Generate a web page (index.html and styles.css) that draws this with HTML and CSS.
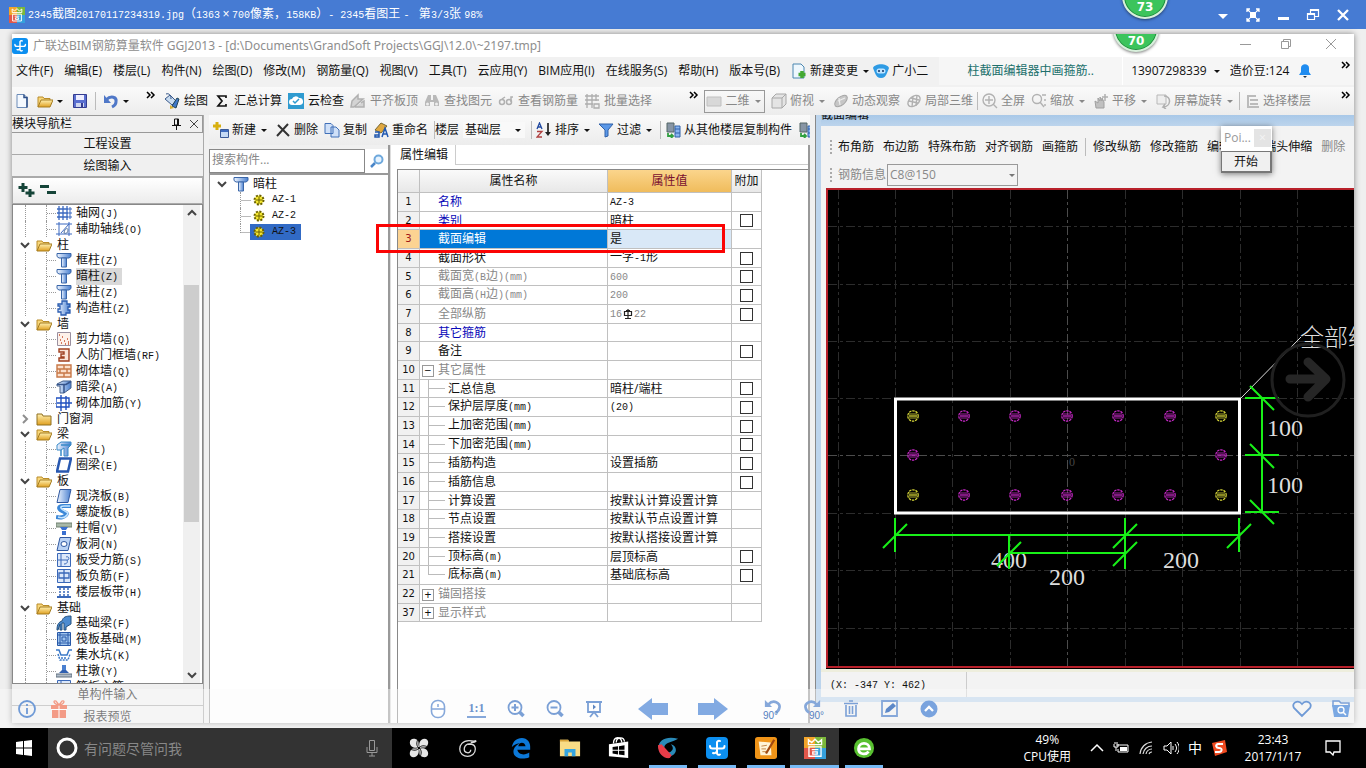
FILE: index.html
```html
<!DOCTYPE html>
<html lang="zh-CN">
<head>
<meta charset="utf-8">
<title>2345看图王</title>
<link rel="stylesheet" href="styles.css">
</head>
<body>
<svg class="defs" aria-hidden="true">
  <linearGradient id="gold" x1="0" y1="0" x2="0" y2="1"><stop offset="0" stop-color="#fff0b0"/><stop offset="1" stop-color="#e0a020"/></linearGradient>
  <linearGradient id="steel" x1="0" y1="0" x2="1" y2="0"><stop offset="0" stop-color="#eef5ff"/><stop offset="1" stop-color="#4a80d0"/></linearGradient>
  <symbol id="glodon" viewBox="0 0 22 22"><rect width="22" height="22" rx="4" fill="#0c8ff0"/><path d="M11 5v11.500a2 2 0 0 0 3 1M11 6a2 2 0 0 1 3-2M4 9a2.500 2.500 0 0 0 2.500 2.500H16a2.500 2.500 0 0 0 2.500-2.500M7 16a3 3 0 0 0 4-2" fill="none" stroke="#fff" stroke-width="2" stroke-linecap="round"/></symbol>
  <symbol id="king" viewBox="0 0 20 20"><path d="M0 0h10v10H0z" fill="#f3a52a"/><path d="M10 0h10v10H10z" fill="#7cb83a"/><path d="M0 10h10v10H0z" fill="#e2574a"/><path d="M10 10h10v10H10z" fill="#35a0dc"/><path d="M4 7V2.500l3 2.500 3-3 3 3 3-2.500V7zM4.500 9h11v8.500h-11zM7 11.500h6M8 13.500h4v2H8z" fill="none" stroke="#fff" stroke-width="1.200"/></symbol>
  <symbol id="arrow" viewBox="0 0 10 16"><path d="M2 7h6L5 10z" fill="currentColor"/></symbol>
  <symbol id="more" viewBox="0 0 10 8"><path d="M1 1l3 3-3 3M5 1l3 3-3 3" fill="none" stroke="#000" stroke-width="1.500"/></symbol>
  <symbol id="new" viewBox="0 0 16 16"><path d="M3 1.500h7l3 3v10H3z" fill="#f4f9ff" stroke="#6c8cb8"/><path d="M10 1.500v3h3v10" fill="none" stroke="#2d4f88" stroke-width="1.500"/></symbol>
  <symbol id="open" viewBox="0 0 16 16"><path d="M1 14V4h5l1 1.500h6V8" fill="#f8d77a" stroke="#b98c2a"/><path d="M1 14l3-7h12l-3 7z" fill="url(#gold)" stroke="#a57c20"/></symbol>
  <symbol id="closedf" viewBox="0 0 16 16"><path d="M1 14V3h5l1 2h8v9z" fill="url(#gold)" stroke="#907020"/></symbol>
  <symbol id="save" viewBox="0 0 16 16"><path d="M1.500 1.500h13v13h-13z" fill="#5a6fd0" stroke="#343c90"/><path d="M4 2h8v5H4z" fill="#eef"/><path d="M4 10h8v4H4z" fill="#cfd6f0"/><path d="M9 10h2v4H9z" fill="#343c90"/></symbol>
  <symbol id="undo" viewBox="0 0 16 16"><path d="M3 7c5-5 11-3 10 2 0 2-2 4-4 5" fill="none" stroke="#5078c8" stroke-width="3"/><path d="M1 2v8h7z" fill="#5078c8"/></symbol>
  <symbol id="paint" viewBox="0 0 16 16"><path d="M1 6l5-4 6 6-4 4z" fill="#c9dcf0" stroke="#39588a"/><path d="M2 1c3-1 5 1 5 5" fill="none" stroke="#39588a"/><path d="M8 13l5-8 2 1-3 9z" fill="#3f78c8" stroke="#245"/><path d="M6 12l4 3-4 1z" fill="#d9b030"/></symbol>
  <symbol id="sum" viewBox="0 0 16 16"><path d="M12 5V3H4l4 5-4 5h8v-2" fill="none" stroke="#111" stroke-width="1.700"/></symbol>
  <symbol id="check" viewBox="0 0 16 16"><path d="M0 0h16v16H0z" fill="#2f9bd0"/><path d="M4 12a3 3 0 0 1 0-6 4 4 0 0 1 7-1 3.500 3.500 0 0 1 1 7z" fill="#fff"/><path d="M5 8l2 2 4-4" fill="none" stroke="#2f9bd0" stroke-width="1.500"/></symbol>
  <symbol id="slab" viewBox="0 0 16 16"><path d="M2 8l6-6v4h5L4 14H1zM5 14h9V8l-3 2" fill="#d4d4d4" stroke="#b0b0b0" stroke-width="1.500"/></symbol>
  <symbol id="find" viewBox="0 0 16 16"><path d="M4 2h3v5H9V2h3l3 7v4h-5V9H6v4H1V9z" fill="#b9b9b9"/><circle cx="3.500" cy="11" r="1.500" fill="#eee"/><circle cx="12.500" cy="11" r="1.500" fill="#eee"/></symbol>
  <symbol id="glass" viewBox="0 0 16 16"><g fill="none" stroke="#b0b0b0" stroke-width="1.500"><circle cx="4" cy="9" r="2.500"/><circle cx="11" cy="9" r="2.500"/><path d="M4 6l3-2M13 9V4h2"/></g></symbol>
  <symbol id="gridg" viewBox="0 0 16 16"><path d="M1 3h14M1 7h14M1 11h8M3 1v14M8 1v14M12 1v7M10 11h5v4h-5z" fill="none" stroke="#adadad" stroke-width="1.300"/></symbol>
  <symbol id="flat" viewBox="0 0 16 16"><path d="M1 4h14v9H1z" fill="#d8d8d8" stroke="#c0c0c0"/></symbol>
  <symbol id="cube" viewBox="0 0 16 16"><path d="M1 5l4-4h10v10l-4 4H1zM1 5h10v10M11 5l4-4" fill="#e4e4e4" stroke="#a8a8a8"/></symbol>
  <symbol id="orbit" viewBox="0 0 16 16"><ellipse cx="8" cy="8" rx="7.500" ry="4" transform="rotate(-40 8 8)" fill="#c6c6c6" stroke="#a6a6a6"/><path d="M5 8l7-3M7 12l-1-7" stroke="#eee" stroke-width="1.200"/></symbol>
  <symbol id="local3" viewBox="0 0 16 16"><g fill="none" stroke="#b0b0b0" stroke-width="1.400"><ellipse cx="8" cy="8" rx="7" ry="4.500" transform="rotate(-40 8 8)"/><path d="M3 8l9 2M5 5l8 2M7 3l-1 11M11 2l-1 11"/></g></symbol>
  <symbol id="full" viewBox="0 0 16 16"><g fill="none" stroke="#b2b2b2" stroke-width="1.400"><circle cx="7" cy="7" r="6"/><path d="M7 3v8M3 7h8M11 11l4 4"/></g></symbol>
  <symbol id="zoomg" viewBox="0 0 16 16"><g fill="none" stroke="#b2b2b2" stroke-width="1.400"><circle cx="6" cy="6" r="4.500"/><path d="M9 9l4 5M11 2h4M13 7h2M13 12h2"/></g></symbol>
  <symbol id="pan" viewBox="0 0 16 16"><path d="M3 15l-1-7 3 2V5l2 3V4l2 4V5l2 4v6z" fill="#c0c0c0" stroke="#a0a0a0"/><path d="M12 1v7M9 4h6" stroke="#b0b0b0" stroke-width="1.500"/></symbol>
  <symbol id="rot" viewBox="0 0 16 16"><path d="M2 2h9v9H2z" fill="#eee" stroke="#b8b8b8"/><path d="M9 3c8 0 7 11-1 11l2-3M8 14l3 2" fill="none" stroke="#b0b0b0" stroke-width="1.500"/></symbol>
  <symbol id="floors" viewBox="0 0 16 16"><path d="M3 3h9M6 7h8M6 11h8M3 14h12M4 3v11" fill="none" stroke="#bbb" stroke-width="2"/></symbol>
  <symbol id="change" viewBox="0 0 16 16"><path d="M2 1h8l3 3v11H2z" fill="#eef7fd" stroke="#4a86b0"/><path d="M11 8v7M7.500 11.500h7" stroke="#43a832" stroke-width="3.500"/></symbol>
  <symbol id="robot" viewBox="0 0 16 16"><path d="M0 5c2-5 14-5 16 0l-2 5c-1 3-3 5-6 5s-5-2-6-5z" fill="#2e9be4"/><rect x="3.500" y="5.500" width="9" height="5" rx="2.500" fill="#bfe4ff"/><path d="M5 8h2M9 8h2" stroke="#136" stroke-width="1.500"/></symbol>
  <symbol id="bell" viewBox="0 0 16 16"><path d="M2 12l2-3V5c0-5 8-5 8 0v4l2 3z" fill="#1f8cf0"/><path d="M6 13h4l-2 2z" fill="#234"/></symbol>
  <symbol id="create" viewBox="0 0 16 16"><path d="M4 0v8M0 4h8" stroke="#d8b010" stroke-width="3"/><path d="M7.500 7.500h8v8h-8z" fill="#c5daf5" stroke="#3a5a98"/><path d="M8 8h7v2H8z" fill="#3f6cc0"/></symbol>
  <symbol id="cross" viewBox="0 0 16 16"><path d="M3 3l11 11M13 2L2 14" stroke="#333" stroke-width="2"/></symbol>
  <symbol id="copy" viewBox="0 0 16 16"><path d="M1 1.500h6l2 2v8H1zM7 5h5l3 3v7H7z" fill="#cfe0f8" stroke="#4170b8"/></symbol>
  <symbol id="rename" viewBox="0 0 16 16"><path d="M2 8L8 1l6 3-6 7z" fill="#e0a840" stroke="#7a6830"/><path d="M2 10h4v5H2v-2h4M9 15l3-9 3 9M10 12h4" fill="none" stroke="#2058b0" stroke-width="1.500"/></symbol>
  <symbol id="sort" viewBox="0 0 16 16"><path d="M1 7l2.500-6L6 7M2 5h3" fill="none" stroke="#2048a0" stroke-width="1.300"/><path d="M1 9.500h5L1 15h5" fill="none" stroke="#b04040" stroke-width="1.300"/><path d="M12 1v11" stroke="#222" stroke-width="1.700"/><path d="M9 10h6l-3 4z" fill="#222"/></symbol>
  <symbol id="funnel" viewBox="0 0 16 16"><path d="M1 2h14l-5 6v6l-3 1V8z" fill="#5b98e8" stroke="#3060a8"/></symbol>
  <symbol id="fromfl" viewBox="0 0 16 16"><path d="M2 1h7v9H2z" fill="#8795a5" stroke="#566"/><path d="M10 4h5v11h-5zM10 7h5M10 11h5" fill="#88b5f0" stroke="#3060a8"/><path d="M3 11v3h4M6 12l2 2-2 2" fill="none" stroke="#30a040" stroke-width="1.800"/></symbol>
  <symbol id="search" viewBox="0 0 16 16"><circle cx="9.500" cy="6.500" r="4" fill="#e6f3ff" stroke="#6ea8dc" stroke-width="2"/><path d="M6 10l-4 4" stroke="#4a86c8" stroke-width="2.500"/></symbol>
  <symbol id="col" viewBox="0 0 16 16"><path d="M1 1.500h14v3l-2 1.500H3L1 4.500z" fill="url(#steel)" stroke="#3a66a8"/><path d="M5.500 6h5v9h-5z" fill="url(#steel)" stroke="#3a66a8"/></symbol>
  <symbol id="gear" viewBox="0 0 12 12"><circle cx="6" cy="6" r="4.500" fill="#f5e830" stroke="#6a6000" stroke-width="2" stroke-dasharray="2 1.500"/><path d="M6 2.500v7M2.500 6h7" stroke="#6a6000"/></symbol>
  <symbol id="axis" viewBox="0 0 16 16"><path d="M1 4h11M1 8h11M1 12h11M3 1v14M7 1v14M11 1v14" stroke="#3a68c0" stroke-width="1.300"/><path d="M13 3h2v2h-2zM13 7h2v2h-2zM13 11h2v2h-2z" fill="#fff" stroke="#3a68c0"/></symbol>
  <symbol id="axis2" viewBox="0 0 16 16"><path d="M3 1v14M13 1v14M0 3h16M0 13h16M5 12l8-9" stroke="#3a68c0" fill="none"/><path d="M8 12c0-4 4-6 4-3s-2 4-4 3z" fill="none" stroke="#5a78a0"/></symbol>
  <symbol id="gz" viewBox="0 0 16 16"><path d="M6 1h5v3h3v3h-2v3h2v3h-4v2H5v-3H2V9h2V6H2V4h4z" fill="url(#steel)" stroke="#2a5cb0" stroke-width="1.300"/></symbol>
  <symbol id="wall" viewBox="0 0 16 16"><path d="M1.500 1.500h13v13h-13z" fill="#fdf1ea" stroke="#9a90a0"/><path d="M3 4h1M6 6h1M4 9h1M8 10h1M11 8h1M5 12h1M9 13h1M12 11h1M12 13h1" stroke="#c85030" stroke-width="1.500"/></symbol>
  <symbol id="rf" viewBox="0 0 16 16"><path d="M3 2h10v12H3v-3h5v-1H5V7h3V5H3z" fill="#fbe5d8" stroke="#a04020" stroke-width="1.400"/></symbol>
  <symbol id="brick" viewBox="0 0 16 16"><path d="M1 2h14v12H1zM1 6h14M1 10h14M8 2v4M4 6v4M11 6v4M8 10v4" fill="#fbe0cc" stroke="#c87848" stroke-width="1.400"/></symbol>
  <symbol id="hbeam" viewBox="0 0 16 16"><path d="M1 5l6-3h8v7l-7 5H4V7H1z" fill="url(#steel)" stroke="#44608c"/><path d="M1 5.500h9l5-3M8 6v8" fill="none" stroke="#36548c" stroke-width="1.500"/></symbol>
  <symbol id="rein" viewBox="0 0 16 16"><path d="M0 3h13v9H0zM5 0v16M10 1v14M1 8h15" fill="none" stroke="#2050c0" stroke-width="1.400"/></symbol>
  <symbol id="beam" viewBox="0 0 16 16"><path d="M1 4l4-3h10v3l-3 3v8H8V7L5 9H1z" fill="url(#steel)" stroke="#3a8ac8"/><path d="M5 15V9M5 4h10" fill="none" stroke="#3a8ac8" stroke-width="1.500"/></symbol>
  <symbol id="ring" viewBox="0 0 16 16"><path d="M4 1.500h11L12 14.500H1z" fill="#fff" stroke="#2858b0" stroke-width="2.500"/></symbol>
  <symbol id="plate" viewBox="0 0 16 16"><path d="M4 1.500h11L12 14.500H1z" fill="url(#steel)" stroke="#3058a0"/></symbol>
  <symbol id="spiral" viewBox="0 0 16 16"><path d="M15 2H7C2 2 2 5 6 7s6 2 4 4-6 3-10 2" fill="none" stroke="#3c88d8" stroke-width="4"/><path d="M14 2H8C4 2 4 4 7 6s6 2 4 5-6 3-9 2" fill="none" stroke="#c5e5ff" stroke-width="1.500"/></symbol>
  <symbol id="cap" viewBox="0 0 16 16"><path d="M0 3h16v4H0z" fill="#a8b8a8" stroke="#708070"/><path d="M4 7h8l-2 3H6zM6 11h4v4H6z" fill="#3a70d0"/></symbol>
  <symbol id="hole" viewBox="0 0 16 16"><path d="M4 1.500h11L12 14.500H1z" fill="#b9d2f5" stroke="#3058a0"/><ellipse cx="8" cy="8" rx="3" ry="2.500" fill="#fff" stroke="#3058a0"/></symbol>
  <symbol id="lbar" viewBox="0 0 16 16"><path d="M1.500 1.500h13v13h-13z" fill="#dce8fa" stroke="#3a68b8"/><path d="M5 1v13M2 8h10c2-2 0-4-2-3M8 12c3 0 4-2 3-4" fill="none" stroke="#3a68b8"/></symbol>
  <symbol id="fbar" viewBox="0 0 16 16"><path d="M1.500 1.500h13v13h-13z" fill="#dce8fa" stroke="#3a68b8"/><path d="M8 1v14M3 5h10v5H3z" fill="none" stroke="#3a68b8" stroke-width="1.300"/></symbol>
  <symbol id="strip" viewBox="0 0 16 16"><path d="M1 3h14M1 13h14" stroke="#3a68b8" stroke-width="2"/><path d="M4 4v9M8 4v9M12 4v9" stroke="#3a68b8" stroke-width="1.500" stroke-dasharray="2 1"/></symbol>
  <symbol id="fbeam" viewBox="0 0 16 16"><path d="M1 15c0-6 2-8 5-9 1-4 4-5 9-5v8l-5 3v3H8V8H6v7H4V9l-2 6z" fill="#4c8bd0" stroke="#24507c"/></symbol>
  <symbol id="raft" viewBox="0 0 16 16"><path d="M1.500 1.500h13v13h-13z" fill="#9ec4ee" stroke="#2858a8"/><path d="M4 1v14M12 1v14M1 4h14M1 12h14M6 6h4v4H6z" fill="none" stroke="#2858a8"/></symbol>
  <symbol id="pit" viewBox="0 0 16 16"><path d="M0 3h3l2 5h6l2-5h3" fill="none" stroke="#3a78c8" stroke-width="1.500"/><path d="M2 7l2 6h8l2-6M5 11h6" fill="none" stroke="#3a78c8" stroke-width="1.500" stroke-dasharray="2 1"/></symbol>
  <symbol id="pier" viewBox="0 0 16 16"><path d="M6 2h4v5H6z" fill="#4a80d0"/><path d="M3 10l3-3h4l3 3z" fill="#3060b0"/><path d="M0 11h16v3H0z" fill="#b0bcc8" stroke="#607080"/></symbol>
  <symbol id="chev" viewBox="0 0 14 16"><path d="M3 6l4 4 4-4" fill="none" stroke="#444" stroke-width="2"/></symbol>
  <symbol id="bar" viewBox="-6 -6 12 12"><circle r="5.200" fill="none" stroke="currentColor" stroke-width="1.200" stroke-dasharray="2.500 .8"/><path d="M-3-3v6M3-3v6M-1-3v6M1-3v6M-4 0h8" fill="none" stroke="currentColor" stroke-width=".8"/></symbol>
</svg>

<header class="viewer-bar">
  <svg class="viewer-logo"><use href="#king"/></svg>
  <h1><span class="m">2345</span>截图<span class="m">20170117234319.jpg</span>（<span class="m">1363</span><span class="wide">×</span><span class="m">700</span>像素，<span class="m">158KB</span>）<span class="m">- 2345</span>看图王 <span class="m">- </span> 第<span class="m">3/3</span>张 <span class="m">98%</span></h1>
  <div class="ball ball-top">73</div>
  <div class="win-buttons">
    <button aria-label="菜单"><svg viewBox="0 0 14 14"><path d="M2 6h10l-5 5z" fill="#fff"/></svg></button>
    <button aria-label="全屏"><svg viewBox="0 0 14 14"><path d="M4 4h6v6H4z" fill="#fff"/><path d="M1 4V1h3M10 1h3v3M13 10v3h-3M4 13H1v-3M1 1l3 3M13 1l-3 3M13 13l-3-3M1 13l3-3" fill="none" stroke="#fff" stroke-width="1.300"/></svg></button>
    <button aria-label="最小化"><svg viewBox="0 0 14 14"><path d="M2 9h11v3H2z" fill="#fff"/></svg></button>
    <button aria-label="还原"><svg viewBox="0 0 14 14"><path d="M4.500 5V1.500h8v7H9M1.500 5.500h7v6h-7zM1 6.500h8M4 2.500h9" fill="none" stroke="#fff" stroke-width="1.200"/></svg></button>
    <button aria-label="关闭"><svg viewBox="0 0 14 14"><path d="M2 2l10 10M12 2L2 12" stroke="#fff" stroke-width="2.300"/></svg></button>
  </div>
</header>

<main class="stage">
<div class="app">
  <div class="app-title">
    <svg class="i16"><use href="#glodon"/></svg>
    <span>广联达BIM钢筋算量软件 GGJ2013 - [d:\Documents\GrandSoft Projects\GGJ\12.0\~2197.tmp]</span>
    <div class="ball-clip"><div class="ball">70</div></div>
    <svg class="app-win" viewBox="0 0 110 16"><path d="M6 8.500h11M47.500 5.500h7v7h-7zM49.500 5V3.500h7v7H55M92 3l10 10M102 3L92 13" fill="none" stroke="#999"/></svg>
  </div>

  <nav class="menu">
    <button>文件(F)</button><button>编辑(E)</button><button>楼层(L)</button><button>构件(N)</button><button>绘图(D)</button><button>修改(M)</button><button>钢筋量(Q)</button><button>视图(V)</button><button>工具(T)</button><button>云应用(Y)</button><button>BIM应用(I)</button><button>在线服务(S)</button><button>帮助(H)</button><button>版本号(B)</button>
    <button><svg class="i16"><use href="#change"/></svg>新建变更<svg class="ar"><use href="#arrow"/></svg></button>
    <button class="robot"><svg class="i16"><use href="#robot"/></svg>广小二</button>
    <div class="account">
      <a href="#" class="tip">柱截面编辑器中画箍筋..</a>
      <span class="phone">13907298339<svg class="ar"><use href="#arrow"/></svg></span>
      <span>造价豆:124</span><svg class="i16"><use href="#bell"/></svg>
      <svg class="more"><use href="#more"/></svg>
    </div>
  </nav>

  <div class="tools">
    <div class="band band-file">
      <button aria-label="新建"><svg class="i16"><use href="#new"/></svg></button>
      <button aria-label="打开"><svg class="i16"><use href="#open"/></svg><svg class="ar"><use href="#arrow"/></svg></button>
      <button aria-label="保存"><svg class="i16"><use href="#save"/></svg></button>
      <i class="sep"></i>
      <button aria-label="撤销"><svg class="i16"><use href="#undo"/></svg><svg class="ar"><use href="#arrow"/></svg></button>
      <svg class="more"><use href="#more"/></svg>
    </div>
    <div class="band band-calc">
      <button><svg class="i16"><use href="#paint"/></svg>绘图</button>
      <button><svg class="i16"><use href="#sum"/></svg>汇总计算</button>
      <button><svg class="i16"><use href="#check"/></svg>云检查</button>
      <button class="off"><svg class="i16"><use href="#slab"/></svg>平齐板顶</button>
      <button class="off"><svg class="i16"><use href="#find"/></svg>查找图元</button>
      <button class="off"><svg class="i16"><use href="#glass"/></svg>查看钢筋量</button>
      <button class="off"><svg class="i16"><use href="#gridg"/></svg>批量选择</button>
      <svg class="more"><use href="#more"/></svg>
    </div>
    <div class="band band-view">
      <button class="off dim"><svg class="i16"><use href="#flat"/></svg>二维<svg class="ar"><use href="#arrow"/></svg></button>
      <button class="off"><svg class="i16"><use href="#cube"/></svg>俯视<svg class="ar"><use href="#arrow"/></svg></button>
      <button class="off"><svg class="i16"><use href="#orbit"/></svg>动态观察</button>
      <button class="off"><svg class="i16"><use href="#local3"/></svg>局部三维</button>
      <i class="sep"></i>
      <button class="off"><svg class="i16"><use href="#full"/></svg>全屏</button>
      <button class="off"><svg class="i16"><use href="#zoomg"/></svg>缩放<svg class="ar"><use href="#arrow"/></svg></button>
      <button class="off"><svg class="i16"><use href="#pan"/></svg>平移<svg class="ar"><use href="#arrow"/></svg></button>
      <button class="off"><svg class="i16"><use href="#rot"/></svg>屏幕旋转<svg class="ar"><use href="#arrow"/></svg></button>
      <i class="sep"></i>
      <button class="off"><svg class="i16"><use href="#floors"/></svg>选择楼层</button>
      <svg class="more"><use href="#more"/></svg>
    </div>
  </div>

  <div class="work">
    <aside class="side">
      <div class="side-cap"><span>模块导航栏</span><svg viewBox="0 0 30 12"><path d="M3.500 1v6h4V1zM1 7.500h9M5.500 8v4M6.500 1v6" fill="none" stroke="#111"/><path d="M19 2l8 8M27 2l-8 8" stroke="#444"/></svg></div>
      <button class="side-btn">工程设置</button>
      <button class="side-btn">绘图输入</button>
      <div class="side-tools"><svg viewBox="0 0 42 16"><path d="M5 0v9M.500 4.500h9M12 6v8M7.500 10h9M22 3.500h9M29 9.500h9" stroke="#154438" stroke-width="3"/></svg></div>
      <div class="side-tree">
        <ul class="tree">
          <li class="kid"><svg><use href="#axis"/></svg><span>轴网<span class="m">(J)</span></span></li>
          <li class="kid last"><svg><use href="#axis2"/></svg><span>辅助轴线<span class="m">(O)</span></span></li>
          <li class="dir"><svg class="chev"><use href="#chev"/></svg><svg><use href="#open"/></svg><span>柱</span></li>
          <li class="kid"><svg><use href="#col"/></svg><span>框柱<span class="m">(Z)</span></span></li>
          <li class="kid cur"><svg><use href="#col"/></svg><span>暗柱<span class="m">(Z)</span></span></li>
          <li class="kid"><svg><use href="#col"/></svg><span>端柱<span class="m">(Z)</span></span></li>
          <li class="kid last"><svg><use href="#gz"/></svg><span>构造柱<span class="m">(Z)</span></span></li>
          <li class="dir"><svg class="chev"><use href="#chev"/></svg><svg><use href="#open"/></svg><span>墙</span></li>
          <li class="kid"><svg><use href="#wall"/></svg><span>剪力墙<span class="m">(Q)</span></span></li>
          <li class="kid"><svg><use href="#rf"/></svg><span>人防门框墙<span class="m">(RF)</span></span></li>
          <li class="kid"><svg><use href="#brick"/></svg><span>砌体墙<span class="m">(Q)</span></span></li>
          <li class="kid"><svg><use href="#hbeam"/></svg><span>暗梁<span class="m">(A)</span></span></li>
          <li class="kid last"><svg><use href="#rein"/></svg><span>砌体加筋<span class="m">(Y)</span></span></li>
          <li class="dir shut"><svg class="chev"><use href="#chev"/></svg><svg><use href="#closedf"/></svg><span>门窗洞</span></li>
          <li class="dir"><svg class="chev"><use href="#chev"/></svg><svg><use href="#open"/></svg><span>梁</span></li>
          <li class="kid"><svg><use href="#beam"/></svg><span>梁<span class="m">(L)</span></span></li>
          <li class="kid last"><svg><use href="#ring"/></svg><span>圈梁<span class="m">(E)</span></span></li>
          <li class="dir"><svg class="chev"><use href="#chev"/></svg><svg><use href="#open"/></svg><span>板</span></li>
          <li class="kid"><svg><use href="#plate"/></svg><span>现浇板<span class="m">(B)</span></span></li>
          <li class="kid"><svg><use href="#spiral"/></svg><span>螺旋板<span class="m">(B)</span></span></li>
          <li class="kid"><svg><use href="#cap"/></svg><span>柱帽<span class="m">(V)</span></span></li>
          <li class="kid"><svg><use href="#hole"/></svg><span>板洞<span class="m">(N)</span></span></li>
          <li class="kid"><svg><use href="#lbar"/></svg><span>板受力筋<span class="m">(S)</span></span></li>
          <li class="kid"><svg><use href="#fbar"/></svg><span>板负筋<span class="m">(F)</span></span></li>
          <li class="kid last"><svg><use href="#strip"/></svg><span>楼层板带<span class="m">(H)</span></span></li>
          <li class="dir"><svg class="chev"><use href="#chev"/></svg><svg><use href="#open"/></svg><span>基础</span></li>
          <li class="kid"><svg><use href="#fbeam"/></svg><span>基础梁<span class="m">(F)</span></span></li>
          <li class="kid"><svg><use href="#raft"/></svg><span>筏板基础<span class="m">(M)</span></span></li>
          <li class="kid"><svg><use href="#pit"/></svg><span>集水坑<span class="m">(K)</span></span></li>
          <li class="kid"><svg><use href="#pier"/></svg><span>柱墩<span class="m">(Y)</span></span></li>
          <li class="kid"><svg><use href="#lbar"/></svg><span>筏板主筋<span class="m">(R)</span></span></li>
        </ul>
        <div class="scroll"><svg class="up"><use href="#chev"/></svg><i></i><svg><use href="#chev"/></svg></div>
      </div>
      <button class="side-btn">单构件输入</button>
      <button class="side-btn side-end">报表预览</button>
    </aside>

    <section class="center">
      <div class="comp-tools">
        <button><svg class="i16"><use href="#create"/></svg>新建<svg class="ar"><use href="#arrow"/></svg></button>
        <button><svg class="i16"><use href="#cross"/></svg>删除</button>
        <button><svg class="i16"><use href="#copy"/></svg>复制</button>
        <button><svg class="i16"><use href="#rename"/></svg>重命名</button>
        <i class="sep"></i>
        <span class="fl">楼层</span>
        <button class="floor">基础层<svg class="ar"><use href="#arrow"/></svg></button>
        <i class="sep"></i>
        <button><svg class="i16"><use href="#sort"/></svg>排序<svg class="ar"><use href="#arrow"/></svg></button>
        <button><svg class="i16"><use href="#funnel"/></svg>过滤<svg class="ar"><use href="#arrow"/></svg></button>
        <i class="sep"></i>
        <button><svg class="i16"><use href="#fromfl"/></svg>从其他楼层复制构件</button>
        <button aria-label="复制构件到其他楼层"><svg class="i16"><use href="#fromfl"/></svg></button>
      </div>
      <div class="panes">
        <div class="comps">
          <div class="find"><input type="text" placeholder="搜索构件..." aria-label="搜索构件"><button aria-label="搜索"><svg class="i16"><use href="#search"/></svg></button></div>
          <ul class="tree comp-tree">
            <li class="root"><svg class="chev"><use href="#chev"/></svg><svg><use href="#col"/></svg><span>暗柱</span></li>
            <li class="leaf"><b><svg><use href="#gear"/></svg><span class="m">AZ-1</span></b></li>
            <li class="leaf"><b><svg><use href="#gear"/></svg><span class="m">AZ-2</span></b></li>
            <li class="leaf last on"><b><svg><use href="#gear"/></svg><span class="m">AZ-3</span></b></li>
          </ul>
        </div>
        <div class="props">
          <div class="tabs"><button>属性编辑</button></div>
          <div class="sheet">
          <table>
            <colgroup><col class="c-num"><col class="c-name"><col class="c-val"><col class="c-add"></colgroup>
            <thead><tr><th></th><th>属性名称</th><th class="hot">属性值</th><th>附加</th></tr></thead>
            <tbody>
            <tr><th>1</th><td class="blue">名称</td><td><span class="m">AZ-3</span></td><td></td></tr>
            <tr><th>2</th><td class="blue">类别</td><td>暗柱</td><td><input type="checkbox" aria-label="附加 类别"></td></tr>
            <tr class="sel"><th>3</th><td>截面编辑</td><td>是</td><td></td></tr>
            <tr><th>4</th><td>截面形状</td><td>一字<span class="m">-1</span>形</td><td><input type="checkbox" aria-label="附加 截面形状"></td></tr>
            <tr class="dimrow"><th>5</th><td>截面宽<span class="m">(B</span>边<span class="m">)(mm)</span></td><td><span class="m">600</span></td><td><input type="checkbox" aria-label="附加 截面宽"></td></tr>
            <tr class="dimrow"><th>6</th><td>截面高<span class="m">(H</span>边<span class="m">)(mm)</span></td><td><span class="m">200</span></td><td><input type="checkbox" aria-label="附加 截面高"></td></tr>
            <tr class="dimrow"><th>7</th><td>全部纵筋</td><td><span class="m">16</span><svg class="phi" viewBox="0 0 12 12"><path d="M6 1v10M3 10.500h6M2.500 3.500h7v4h-7zM4 2.500h4M6 3.500v4" fill="none" stroke="#222" stroke-width="1.200"/></svg><span class="m">22</span></td><td><input type="checkbox" aria-label="附加 全部纵筋"></td></tr>
            <tr><th>8</th><td class="blue">其它箍筋</td><td></td><td></td></tr>
            <tr><th>9</th><td>备注</td><td></td><td><input type="checkbox" aria-label="附加 备注"></td></tr>
            <tr class="dimrow group"><th>10</th><td><button class="pm">−</button>其它属性</td><td></td><td></td></tr>
            <tr class="sub"><th>11</th><td>汇总信息</td><td>暗柱/端柱</td><td><input type="checkbox" aria-label="附加 汇总信息"></td></tr>
            <tr class="sub"><th>12</th><td>保护层厚度<span class="m">(mm)</span></td><td><span class="m">(20)</span></td><td><input type="checkbox" aria-label="附加 保护层厚度"></td></tr>
            <tr class="sub"><th>13</th><td>上加密范围<span class="m">(mm)</span></td><td></td><td><input type="checkbox" aria-label="附加 上加密范围"></td></tr>
            <tr class="sub"><th>14</th><td>下加密范围<span class="m">(mm)</span></td><td></td><td><input type="checkbox" aria-label="附加 下加密范围"></td></tr>
            <tr class="sub"><th>15</th><td>插筋构造</td><td>设置插筋</td><td><input type="checkbox" aria-label="附加 插筋构造"></td></tr>
            <tr class="sub"><th>16</th><td>插筋信息</td><td></td><td><input type="checkbox" aria-label="附加 插筋信息"></td></tr>
            <tr class="sub"><th>17</th><td>计算设置</td><td>按默认计算设置计算</td><td></td></tr>
            <tr class="sub"><th>18</th><td>节点设置</td><td>按默认节点设置计算</td><td></td></tr>
            <tr class="sub"><th>19</th><td>搭接设置</td><td>按默认搭接设置计算</td><td></td></tr>
            <tr class="sub"><th>20</th><td>顶标高<span class="m">(m)</span></td><td>层顶标高</td><td><input type="checkbox" aria-label="附加 顶标高"></td></tr>
            <tr class="sub end"><th>21</th><td>底标高<span class="m">(m)</span></td><td>基础底标高</td><td><input type="checkbox" aria-label="附加 底标高"></td></tr>
            <tr class="dimrow group"><th>22</th><td><button class="pm">+</button>锚固搭接</td><td></td><td></td></tr>
            <tr class="dimrow group"><th>37</th><td><button class="pm">+</button>显示样式</td><td></td><td></td></tr>
            </tbody>
          </table>
          </div>
          <div class="mark"></div>
        </div>
      </div>
    </section>

    <section class="editor">
      <div class="ed-title"><span>截面编辑</span></div>
      <div class="ed-body">
        <div class="ed-tools"><i class="grip"></i><button>布角筋</button><button>布边筋</button><button>特殊布筋</button><button>对齐钢筋</button><button>画箍筋</button><i class="sep"></i><button>修改纵筋</button><button>修改箍筋</button><button>编辑弯钩</button><button>端头伸缩</button><button class="off">删除</button></div>
        <div class="ed-tools"><i class="grip"></i><label for="bar-info">钢筋信息</label><div class="pick"><select id="bar-info"><option>C8@150</option></select><svg class="ar"><use href="#arrow"/></svg></div></div>
        <svg class="cad" viewBox="826 188 528 481" preserveAspectRatio="xMinYMin slice">
          <path fill="#000" d="M826 188h1400v481H826z"/>
          <path d="M838.500 190v478M895.500 190v478M952.500 190v478M1010.500 190v478M1125.500 190v478M1182.500 190v478M1240.500 190v478M1297.500 190v478M828 226.500h1398M828 284.500h1398M828 341.500h1398M828 398.500h1398M828 513.500h1398M828 570.500h1398M828 628.500h1398" stroke="#2c2c2c" stroke-dasharray="9 3 3 3"/>
          <path d="M1067.500 190v478M828 455.500h1398" stroke="#4c4c4c" stroke-dasharray="9 3 3 3"/>
          <path d="M2226 189H827v478h1399" fill="none" stroke="#b8202a" stroke-width="2"/>
          <path d="M895.500 399h344v114h-344z" fill="none" stroke="#fff" stroke-width="3"/>
          <path d="M1241 398l60-61" stroke="#ddd"/>
          <g color="#d8d838"><use href="#bar" x="907" y="410" width="12" height="12"/><use href="#bar" x="1215" y="410" width="12" height="12"/><use href="#bar" x="907" y="489" width="12" height="12"/><use href="#bar" x="1215" y="489" width="12" height="12"/></g>
          <g color="#c828c8"><use href="#bar" x="958" y="410" width="12" height="12"/><use href="#bar" x="1009" y="410" width="12" height="12"/><use href="#bar" x="1061" y="410" width="12" height="12"/><use href="#bar" x="1112" y="410" width="12" height="12"/><use href="#bar" x="1164" y="410" width="12" height="12"/><use href="#bar" x="958" y="489" width="12" height="12"/><use href="#bar" x="1009" y="489" width="12" height="12"/><use href="#bar" x="1061" y="489" width="12" height="12"/><use href="#bar" x="1112" y="489" width="12" height="12"/><use href="#bar" x="1164" y="489" width="12" height="12"/><use href="#bar" x="907" y="449" width="12" height="12"/><use href="#bar" x="1215" y="449" width="12" height="12"/></g>
          <text x="1069" y="466" class="zero">0</text>
          <g class="dims"><text x="991" y="568">400</text><text x="1049" y="585">200</text><text x="1163" y="568">200</text><text x="1267" y="436">100</text><text x="1267" y="493">100</text></g>
          <text x="1300" y="346" class="lead">全部纵筋</text>
          <path d="M895 535h344M1009 553h116M895 518v34M1239 518v34M1125 518v51M1009 535v34M883 548l24-24M1227 548l24-24M1113 548l24-24M997 566l24-24M1113 566l24-24M1262 398v115M1245 398h34M1245 455h34M1245 512h34M1250 386l24 24M1250 444l24 24M1250 500l24 24" fill="none" stroke="#18f018" stroke-width="2"/>
          <circle cx="1308" cy="380" r="36" fill="none" stroke="#202020" stroke-width="3"/>
          <path d="M1290 379h32M1308 362l18 17-18 18" fill="none" stroke="#262626" stroke-width="9" stroke-linecap="round" stroke-linejoin="round"/>
        </svg>
        <div class="status"><span class="m">(X: -347 Y: 462)</span></div>
      </div>
      <div class="float"><div><span>Poi...</span><i>×</i></div><button>开始</button></div>
    </section>
  </div>
</div>

<div class="viewer-tools">
  <div class="vt-left">
    <button aria-label="信息"><svg viewBox="0 0 20 20"><g fill="none" stroke="#6f9ad6" stroke-width="1.800"><circle cx="10" cy="10" r="8"/><path d="M10 9v6M10 5v2"/></g></svg></button>
    <button aria-label="礼物"><svg viewBox="0 0 20 20"><path d="M2 6h16v4H2zM3 11h14v8H3z" fill="#f39b86"/><path d="M10 6v13M2 10.500h16" stroke="#fff"/><path d="M10 6C4 5 4 1 7 2l3 4 3-4c3-1 3 3-3 4" fill="none" stroke="#f39b86" stroke-width="1.300"/></svg></button>
  </div>
  <div class="vt-mid">
    <button aria-label="鼠标"><svg viewBox="0 0 20 20"><rect x="3.500" y="1.500" width="13" height="17" rx="6" fill="#fff" stroke="#86a8da" stroke-width="1.600"/><path d="M3 10h14M10 5v3" stroke="#86a8da" stroke-width="1.500"/></svg></button>
    <button class="one">1:1</button>
    <button aria-label="放大"><svg viewBox="0 0 20 20"><g fill="none" stroke="#7ba0d6"><circle cx="9" cy="8.500" r="6.500" stroke-width="1.800"/><path d="M9 5v7M5.500 8.500h7" stroke-width="2"/><path d="M13.500 13l4 4" stroke-width="3.500"/></g></svg></button>
    <button aria-label="缩小"><svg viewBox="0 0 20 20"><g fill="none" stroke="#7ba0d6"><circle cx="9" cy="8.500" r="6.500" stroke-width="1.800"/><path d="M5.500 8.500h7" stroke-width="2"/><path d="M13.500 13l4 4" stroke-width="3.500"/></g></svg></button>
    <button aria-label="幻灯片"><svg viewBox="0 0 20 20"><path d="M2 3h16M4 3v10h12V3M6 18l4-5 4 5" fill="none" stroke="#7ba0d6" stroke-width="1.800"/><path d="M9 5.500v5l3-2.500z" fill="#5d85c0"/></svg></button>
    <div class="turn"><button aria-label="上一张"><svg viewBox="0 0 32 24"><path d="M1 12L15 1v5h16v12H15v5z" fill="#82aae2"/></svg></button><button aria-label="下一张"><svg viewBox="0 0 32 24"><path d="M31 12L17 1v5H1v12h16v5z" fill="#82aae2"/></svg></button></div>
    <button class="deg"><svg viewBox="0 0 20 20"><path d="M5 6c5-6 14-2 12 4-.5 3-2 4-4 5" fill="none" stroke="#86a8da" stroke-width="3"/><path d="M1 1v8h8z" fill="#86a8da"/></svg><span>90°</span></button>
    <button class="deg right"><svg viewBox="0 0 20 20"><path d="M15 6C10 0 1 4 3 10c.5 3 2 4 4 5" fill="none" stroke="#86a8da" stroke-width="3"/><path d="M19 1v8h-8z" fill="#86a8da"/></svg><span>90°</span></button>
    <button aria-label="删除"><svg viewBox="0 0 20 20"><path d="M5 6v11h10V6M3 4.500h14M8 2h4M8.500 7v8M11.500 7v8" fill="none" stroke="#7ba0d6" stroke-width="1.600"/></svg></button>
    <button aria-label="编辑"><svg viewBox="0 0 20 20"><path d="M2 2h15v15H2z" fill="none" stroke="#86a8da" stroke-width="1.800"/><path d="M5 14l1-4 7-6 3 3-7 6z" fill="#5d88c8"/></svg></button>
    <button aria-label="更多"><svg viewBox="0 0 20 20"><circle cx="10" cy="10" r="8.500" fill="#79a3de"/><path d="M6 12l4-4 4 4" fill="none" stroke="#fff" stroke-width="2.300"/></svg></button>
  </div>
  <div class="vt-right">
    <button aria-label="收藏"><svg viewBox="0 0 20 20"><path d="M10 17L2 9c-3-5 4-9 8-4 4-5 11-1 8 4z" fill="none" stroke="#6f9ad6" stroke-width="1.800"/></svg></button>
    <button aria-label="文件夹"><svg viewBox="0 0 20 20"><path d="M2 2h6l2 2h8v3H2z" fill="none" stroke="#7ba0d6" stroke-width="1.500"/><path d="M1 6h18l-2 12H3z" fill="#7ba8e2"/><circle cx="10" cy="11" r="3" fill="none" stroke="#fff" stroke-width="1.300"/><path d="M12 13l3 3" stroke="#fff" stroke-width="1.500"/></svg></button>
  </div>
</div>
</main>

<footer class="taskbar">
  <button class="start" aria-label="开始"><svg viewBox="0 0 16 16"><path d="M0 2l7-1v6.500H0zM8 1l8-1v7.500H8zM0 8.500h7V15l-7-1zM8 8.500h8V16l-8-1z" fill="#fff"/></svg></button>
  <div class="ask"><svg viewBox="0 0 22 22"><circle cx="11" cy="11" r="9" fill="none" stroke="#fff" stroke-width="3"/></svg><input type="text" placeholder="有问题尽管问我" aria-label="搜索"><svg class="mic" viewBox="0 0 12 18"><path d="M3.500 1.500h5v10h-5zM1 8v5.500h10V8M6 14v3M3 17h6" fill="none" stroke="#999"/></svg></div>
  <div class="apps">
    <button aria-label="花"><svg viewBox="0 0 24 24"><g fill="#e6e6e6"><path d="M12 11C8 13 2 11 2 6s6-5 9-2c1 2 0 4 1 7z"/><path d="M13 12c-2-4 0-10 5-10s5 6 2 9c-2 1-4 0-7 1z"/><path d="M12 13c4-2 10 0 10 5s-6 5-9 2c-1-2 0-4-1-7z"/><path d="M11 12c2 4 0 10-5 10s-5-6-2-9c2-1 4 0 7-1z"/></g><path d="M12 12c-3-2-3-6-1-10M12 12c2-3 6-3 10-1M12 12c3 2 3 6 1 10M12 12c-2 3-6 3-10 1" fill="none" stroke="#000"/></svg></button>
    <button aria-label="云"><svg viewBox="0 0 24 24"><path d="M21 4c-3 1-5 0-8 0-7 0-10 5-10 9 0 11 17 11 17 0 0-6-10-8-12-1-1 6 7 7 7 2M15 6c3 0 5 0 6-2M17 8h-5" fill="none" stroke="#ddd" stroke-width="1.400"/></svg></button>
    <button class="edge" aria-label="Edge"><svg viewBox="0 0 24 24"><path d="M2 11C3 5 7 1 13 1c6 0 9 5 9 9v4H8c1 6 9 6 13 3v5C12 26 2 22 4 14c1-4 4-6 7-7-5 0-7 2-9 4zm7-1h8c-1-5-7-5-8 0z" fill="#0c78d8"/></svg></button>
    <button aria-label="文件夹"><svg viewBox="0 0 24 24"><path d="M1 3h9l1 2h12v16H1z" fill="#f8dc86"/><path d="M1 3h9l1 2H1z" fill="#d8a43a"/><path d="M6 21v-8h12v8h-4v-4h-4v4z" fill="#35a5e0"/></svg></button>
    <button aria-label="商店"><svg viewBox="0 0 24 24"><path d="M1 8l21-3v18L1 21z" fill="#fff"/><path d="M6 7c0-8 9-8 9-1M9 6c0-6 8-7 9-1" fill="none" stroke="#fff" stroke-width="1.500"/><path d="M5 11l6-1v4H5zM12 10l6-1v5h-6zM5 15h6v4l-6-1zM12 15h6v5l-6-1z" fill="#000"/></svg></button>
    <button class="run" aria-label="G"><svg viewBox="0 0 24 24"><path d="M23 2C10-2 0 4 2 13c1 8 10 10 15 7 6-4 4-11-2-12 3 3 3 6 0 8-4 2-8-1-7-5 1-5 8-5 15-9z" fill="#2a8ab8"/><path d="M1 9l4-1 11 12-2 3C7 24 1 18 1 9z" fill="#e83c48"/></svg></button>
    <button class="run" aria-label="广联达"><svg><use href="#glodon"/></svg></button>
    <button class="run" aria-label="笔记"><svg viewBox="0 0 24 24"><rect width="24" height="24" rx="3" fill="#f09418"/><path d="M4 5l13 1 1 14H6z" fill="#fff4d8"/><path d="M7 10l6-1M7 13h5M8 16h4" stroke="#c08040"/><path d="M12 18L21 3" stroke="#a04810" stroke-width="2.500"/></svg></button>
    <button class="run active" aria-label="看图王"><svg><use href="#king"/></svg></button>
    <button class="run" aria-label="浏览器"><svg viewBox="0 0 24 24"><circle cx="12" cy="12" r="11" fill="#58c030"/><path d="M6 13h12c0-8-12-8-12 0 0 6 8 7 11 3" fill="none" stroke="#fff" stroke-width="3"/></svg></button>
  </div>
  <div class="tray">
    <div class="cpu">49%<br>CPU使用</div>
    <svg class="t14" viewBox="0 0 14 14"><path d="M1 10l6-6 6 6" fill="none" stroke="#fff" stroke-width="1.500"/></svg>
    <svg class="t16" viewBox="0 0 16 14"><path d="M3 4h12v7H5V8" fill="none" stroke="#fff"/><path d="M7 6h7v4H7z" fill="#fff"/><path d="M1 3v3h4V3M2 1v2M4 1v2M3 6v4" fill="none" stroke="#fff"/></svg>
    <svg class="t16" viewBox="0 0 16 16"><path d="M2 14A13 13 0 0 1 14 2M5 14a9 9 0 0 1 9-8M8 14a6 6 0 0 1 6-5M11 14a3 3 0 0 1 3-2" fill="none" stroke="#ddd" stroke-width="1.200"/></svg>
    <svg class="t16" viewBox="0 0 16 16"><path d="M1 6h3l4-4v12l-4-4H1zM10 6v4M12 4c2 3 2 5 0 8M14 2c3 4 3 8 0 12" fill="none" stroke="#fff"/></svg>
    <span class="ime">中</span>
    <svg class="t16" viewBox="0 0 16 16"><path d="M1 3l13-3 2 12-12 4z" fill="#f04a20"/><path d="M12 4H7c-3 1-2 4 1 4 4 0 3 4 0 4H4" fill="none" stroke="#fff" stroke-width="2"/></svg>
    <div class="clock">23:43<br>2017/1/17</div>
    <svg class="t16" viewBox="0 0 16 16"><path d="M1 1h14v11H9l-1 3-3-3H1z" fill="none" stroke="#fff" stroke-width="1.300"/></svg>
  </div>
</footer>
</body>
</html>
```

FILE: styles.css
```css
* { box-sizing: border-box; }
body {
  margin: 0; height: 100vh; overflow: hidden; display: flex; flex-direction: column;
  background: #efefef; color: #111;
  font: 12px/16px "Open Sans", "Noto Sans CJK SC", sans-serif;
}
button {
  border: 0; padding: 0; background: none; color: inherit; font: inherit; white-space: nowrap;
  display: flex; align-items: center; justify-content: center; flex: none;
}
ul { list-style: none; margin: 0; padding: 0; }
a { text-decoration: none; }
svg { flex: none; display: block; }
.defs { position: absolute; width: 0; height: 0; }
.m { font: 10px/14px "Liberation Mono", monospace; white-space: pre; }
.i16 { width: 16px; height: 16px; }
.ar { width: 10px; height: 16px; }
.more { width: 10px; height: 8px; margin-left: auto; align-self: flex-start; margin-top: 4px; }
.sep { width: 1px; height: 18px; background: #bbb; flex: none; }
.off { color: #888; }

/* viewer title bar */
.viewer-bar { position: relative; flex: none; height: 29px; background: #467bd3; color: #fff; display: flex; align-items: center; padding: 0 16px 0 9px; overflow: hidden; }
.viewer-logo { width: 16px; height: 16px; margin-right: 3px; }
.viewer-bar h1 { margin: 0; flex: 1; font-size: 12px; font-weight: 400; white-space: pre; font-family: "Liberation Sans", "Noto Sans CJK SC", sans-serif; }
.wide { display: inline-block; width: 12px; text-align: center; }
.win-buttons { display: flex; gap: 16px; }
.win-buttons svg { width: 14px; height: 14px; }
.ball { width: 46px; height: 46px; border-radius: 50%; background: #3cc45c; border: 2px solid #d8f0dc; box-shadow: 0 1px 3px rgba(0,0,0,.5), inset 0 0 0 1px #1f8a3c; color: #fff; font: bold 12px/14px "DejaVu Sans", sans-serif; text-align: center; }
.ball-top { position: absolute; right: 198px; top: -27px; padding-top: 25px; }
.ball-clip { position: absolute; right: 193px; top: 0; width: 50px; height: 24px; overflow: hidden; }
.ball-clip .ball { margin: -28px 2px 0; padding-top: 26px; }

.stage { position: relative; flex: 1; min-height: 0; padding: 5px 12px; display: flex; }
.app { flex: 1; min-width: 0; background: #fff; box-shadow: 0 0 6px rgba(0,0,0,.45); display: flex; flex-direction: column; overflow: hidden; }
.app-title { position: relative; flex: none; height: 23px; display: flex; align-items: center; gap: 5px; color: #8e8e8e; white-space: nowrap; font-family: "Noto Sans", "Noto Sans CJK SC", sans-serif; }
.app-win { width: 110px; height: 16px; margin: -4px 10px 0 auto; }

.menu { flex: none; height: 30px; background: #f1f1f1; display: flex; align-items: center; gap: 11px; padding: 0 0 2px 4px; }
.menu button { gap: 3px; }
.robot { margin-left: -9px; }
.account { margin-left: auto; width: 421px; align-self: stretch; background: #f6f6f6; display: flex; align-items: center; gap: 8px; }
.tip { width: 184px; text-align: center; color: #20706c; align-self: stretch; line-height: 28px; border-right: 1px solid #fff; }
.phone { display: flex; gap: 5px; }
.account .more { margin-right: 3px; }

.tools { flex: none; height: 28px; display: flex; background: linear-gradient(#fafafa, #ececec); }
.band { display: flex; align-items: center; gap: 6px; }
.band button { gap: 4px; }
.band-file { width: 149px; padding-left: 2px; gap: 7px; }
.band-file button { gap: 2px; }
.band-calc { width: 543px; padding-left: 3px; }
.band-file .more, .band-calc .more { margin-right: 5px; }
.band-view { flex: 1; min-width: 0; }
.band-view button { gap: 3px; }
.band-view .sep { margin: 0 -2px; }
.band-view .more { margin-right: 3px; }
.band-view .dim { width: 61px; height: 23px; border: 1px solid #999; }

.work { flex: 1; min-height: 0; display: grid; grid-template-columns: 192px 606px minmax(0, 1fr); background: #f0f0f0; }

/* module navigator */
.side { display: flex; flex-direction: column; min-height: 0; overflow: hidden; border-right: 1px solid #aaa; }
.side-cap { flex: none; height: 18px; border: 1px solid #999; border-left: 0; display: flex; justify-content: space-between; align-items: center; line-height: 16px; }
.side-cap svg { width: 30px; height: 12px; margin-right: 1px; }
.side-btn { height: 22px; border-bottom: 1px solid #aaa; background: #f0f0f0; }
.side-end { margin-bottom: -5px; }
.side-tools { flex: none; height: 27px; padding: 5px 5px 0; background: linear-gradient(#fff, #ececec); border: 1px solid #aaa; }
.side-tools svg { width: 42px; height: 16px; }
.side-tree { flex: 1; min-height: 0; display: flex; background: #fff; border: 1px solid #888; }
.tree { flex: 1; min-width: 0; overflow: hidden; }
.tree li { display: flex; align-items: center; height: 16px; white-space: nowrap; line-height: 16px; }
.tree svg { width: 16px; height: 16px; order: 2; }
.tree li > span { order: 2; }
.tree .chev { width: 14px; order: 0; }
.tree .dir { height: 15px; padding-left: 5px; }
.dir > svg + svg { margin: 0 5px 0 4px; }
.shut .chev { transform: rotate(-90deg); opacity: .6; }
.kid { padding-left: 12px; }
.kid::before { content: ""; width: 20px; align-self: stretch; border: 1px dotted #999; border-width: 0 1px; }
.kid::after { content: ""; width: 9px; border-top: 1px dotted #999; order: 1; }
.kid > svg { margin-right: 4px; }
.cur > span { background: #d9d9d9; padding-right: 4px; }
.scroll { width: 17px; margin-right: 2px; background: #f0f0f0; display: flex; flex-direction: column; align-items: center; }
.scroll svg { width: 14px; height: 16px; }
.scroll .up { transform: rotate(180deg); }
.scroll i { flex: none; width: 15px; height: 237px; margin: 64px 0 auto; background: #cdcdcd; }

/* component list and properties */
.center { padding-left: 5px; display: flex; flex-direction: column; min-width: 0; min-height: 0; overflow: hidden; }
.comp-tools { flex: none; height: 30px; display: flex; align-items: center; gap: 6px; padding-left: 4px; overflow: hidden; background: linear-gradient(#fafafa, #ececec); white-space: nowrap; }
.comp-tools button { gap: 3px; }
.comp-tools .fl { margin: 0 -2px 0 -4px; flex: none; }
.comp-tools .floor { width: 62px; justify-content: space-between; background: #f9f9f9; padding: 0 2px; }
.comp-tools .sep { margin-right: -2px; }
.panes { flex: 1; min-height: 0; display: flex; }
.comps { width: 181px; flex: none; display: flex; flex-direction: column; border-right: 2px solid #999; background: #fff; }
.find { flex: none; display: flex; height: 28px; padding-top: 4px; background: #f0f0f0; }
.find input { width: 156px; height: 24px; border: 1px solid #888; padding: 0 2px 4px; font: inherit; background: #fff; }
.find input::placeholder, .ask input::placeholder { color: #888; opacity: 1; }
.find button { flex: 1; background: #fff; }
.comp-tree { border: 1px solid #999; border-width: 2px 0 0 1px; padding: 1px 0 0 5px; }
.root > svg + svg { margin: 0 4px; }
.leaf { padding-left: 25px; }
.leaf::before { content: ""; width: 10px; align-self: stretch; border-left: 1px dotted #999; background: linear-gradient(#bbb, #bbb) 0 8px / 10px 1px no-repeat; }
.leaf.last::before { height: 9px; align-self: flex-start; }
.leaf b { display: flex; align-items: center; height: 16px; margin-left: -1px; padding: 0 5px 0 3px; gap: 7px; font-weight: 400; }
.leaf svg { width: 12px; height: 12px; order: 0; }
.leaf.on b { background: #316ac5; }
.props { position: relative; flex: 1; min-width: 0; padding-left: 6px; display: flex; flex-direction: column; border-right: 2px solid #999; background: #fff; border-left: 1px solid #ddd; }
.tabs { flex: none; height: 20px; border-bottom: 1px solid #ccc; }
.tabs button { width: 59px; height: 20px; padding-right: 4px; background: #fff; border-right: 1px solid #ccc; }
.sheet { margin-top: 4px; border: 1px solid #888; border-width: 1px 0 0 1px; flex: 1; overflow: hidden; }
table { width: 364px; table-layout: fixed; border-collapse: separate; border-spacing: 0; }
.c-num { width: 22px; } .c-name { width: 188px; } .c-val { width: 124px; } .c-add { width: 30px; }
td, th { height: 19px; padding: 0; font-weight: 400; border: 1px solid #c0c0c0; border-width: 0 1px 1px 0; line-height: 14px; white-space: nowrap; text-align: left; overflow: hidden; }
tbody tr:nth-child(3n+2) > * { height: 18px; }
thead th { height: 23px; text-align: center; background: linear-gradient(#fafafa, #e8e8e8); }
thead .hot { background: linear-gradient(#fbd58c, #f0bc5c); color: #7a1030; }
tbody th { text-align: center; background: #f1f1f1; font: 10px/14px "DejaVu Sans", sans-serif; }
td:nth-child(2) { padding-left: 18px; position: relative; }
td:nth-child(3) { padding-left: 2px; }
td input { appearance: none; display: block; margin: 0 auto; width: 13px; height: 13px; border: 1px solid #333; background: #fff; }
.blue { color: #0808b8; }
.dimrow td { color: #888; }
.sel th { background: #fcd392; color: #a01818; }
.sel td:nth-child(2) { background: #0078d7; color: #fff; }
.sel td:nth-child(3) { background: #d9e8f7; }
.group td:nth-child(2) { padding-left: 2px; }
.pm { display: inline-flex; width: 12px; height: 12px; border: 1px solid #999; color: #111; line-height: 10px; margin-right: 4px; vertical-align: middle; }
.sub td:nth-child(2) { padding-left: 28px; }
.sub td:nth-child(2)::before { content: ""; position: absolute; left: 8px; top: 0; bottom: 0; border-left: 1px solid #bbb; }
.sub td:nth-child(2)::after { content: ""; position: absolute; left: 8px; top: 8px; width: 17px; border-top: 1px solid #bbb; }
.end td:nth-child(2)::before { bottom: 50%; }
.phi { display: inline-block; width: 12px; height: 12px; vertical-align: middle; }
.mark { position: absolute; left: -15px; top: 79px; width: 349px; height: 29px; border: 3px solid #fb0404; }

/* section editor window */
.editor { position: relative; margin: 0 0 21px 5px; background: #bcd4ec; border-left: 1px solid #888; padding: 0 0 5px 5px; display: flex; flex-direction: column; min-width: 0; }
.ed-title { flex: none; height: 11px; overflow: hidden; background: linear-gradient(#a8c8e8, #bcd4ec); }
.ed-title span { display: block; margin-top: -7px; line-height: 14px; }
.ed-body { flex: 1; min-height: 0; display: flex; flex-direction: column; background: #f3f3f3; overflow: hidden; }
.ed-tools { flex: none; height: 27px; display: flex; align-items: center; gap: 9px; padding-left: 9px; white-space: nowrap; }
.ed-tools:first-child { height: 35px; padding-top: 6px; }
.ed-tools .sep { margin: 0 -2px; }
.grip { width: 2px; height: 14px; border-left: 2px dotted #aaa; margin-right: -3px; flex: none; }
.ed-tools label { color: #888; margin-right: -8px; }
.pick { position: relative; }
.pick select { appearance: none; width: 131px; height: 22px; border: 1px solid #999; border-radius: 0; background: #f3f3f3; color: #888; font: inherit; padding: 0 2px; }
.pick .ar { position: absolute; right: 1px; top: 3px; color: #777; }
.cad { flex: 1; min-height: 0; width: auto; margin-left: 5px; }
.zero { font: 12px "Liberation Serif", serif; fill: #444; }
.dims { font: 24px "Liberation Serif", serif; fill: #ddd; }
.lead { font: 24px "Noto Sans CJK SC", sans-serif; font-weight: 300; fill: #ddd; }
.status { flex: none; height: 28px; padding: 5px 0 0 9px; border-top: 3px solid #eed; background: linear-gradient(90deg, transparent 145px, #ccc 145px, #ccc 146px, transparent 146px); line-height: 14px; }
.float { position: absolute; right: 82px; top: 11px; width: 51px; box-shadow: 0 1px 6px rgba(0,0,0,.5); background: #fff; }
.float div { display: flex; justify-content: space-between; height: 25px; padding: 3px 1px 0 3px; color: #999; line-height: 18px; }
.float i { width: 17px; height: 18px; background: #e4e4e4; color: #f4f4f4; text-align: center; font-style: normal; }
.float button { width: 51px; height: 22px; background: #f0f0f0; border: 1px solid #777; border-right-width: 2px; border-bottom-width: 2px; }

/* viewer overlay toolbar */
.viewer-tools { position: absolute; left: 0; right: 0; bottom: 0; height: 39px; background: rgba(250,250,250,.45); display: grid; grid-template-columns: 1fr auto 1fr; align-items: center; }
.viewer-tools button { width: 39px; height: 24px; }
.viewer-tools svg { width: 20px; height: 20px; }
.vt-left { display: flex; padding-left: 11px; }
.vt-left button { width: 32px; }
.vt-mid { display: flex; align-items: center; }
.vt-right { display: flex; justify-content: flex-end; padding-right: 6px; }
.viewer-tools .one { height: 18px; width: 19px; margin: 0 10px; border-bottom: 2px solid #86a8da; color: #6f94cc; font: bold 12px/14px "Liberation Serif", serif; }
.turn { display: flex; padding: 0 10px; }
.viewer-tools .turn button { width: 60px; }
.viewer-tools .turn svg { width: 32px; height: 24px; }
.deg { position: relative; color: #5580c0; }
.viewer-tools .deg svg { width: 18px; height: 18px; margin-top: -2px; }
.deg span { position: absolute; left: 10px; bottom: -1px; font: 10px/12px "Liberation Sans", sans-serif; }
.deg.right span { left: 17px; }

/* taskbar */
.taskbar { flex: none; height: 40px; background: #000; color: #fff; display: flex; align-items: stretch; }
.start { width: 48px; }
.start svg { width: 16px; height: 16px; }
.ask { width: 344px; background: #333; display: flex; align-items: center; padding: 0 14px 0 8px; }
.ask svg { width: 22px; height: 22px; }
.ask .mic { width: 12px; height: 18px; }
.ask input { flex: 1; min-width: 0; border: 0; background: none; color: #fff; font: 14px/20px "Noto Sans CJK SC", sans-serif; padding: 0 6px; }
.apps { display: flex; padding-left: 2px; }
.apps button { width: 49px; border-bottom: 3px solid transparent; border-top: 3px solid transparent; }
.apps .edge { margin-left: 4px; }
.apps svg { width: 22px; height: 22px; }
.apps .run { background: linear-gradient(#76b9f5, #76b9f5) center bottom / 38px 3px no-repeat border-box; }
.apps .active { background: linear-gradient(#76b9f5, #76b9f5) center bottom / 49px 3px no-repeat border-box, #333 border-box; }
.tray { margin-left: auto; display: flex; align-items: center; gap: 9px; padding-right: 25px; }
.cpu, .clock { text-align: center; line-height: 17px; }
.cpu { margin-right: 10px; }
.clock { width: 66px; margin: 0 10px 0 4px; }
.ime { font-size: 14px; }
.t16 { width: 16px; height: 16px; }
.t14 { width: 14px; height: 14px; }
```
